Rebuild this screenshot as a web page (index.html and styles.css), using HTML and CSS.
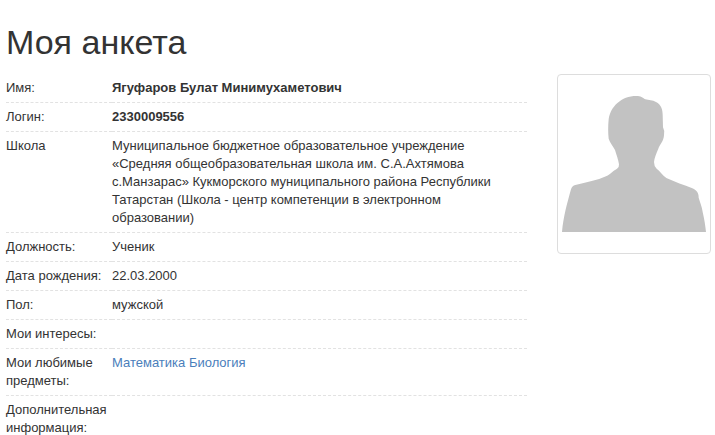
FILE: index.html
```html
<!DOCTYPE html>
<html lang="ru">
<head>
	<meta charset="UTF-8">
	<title>Моя анкета</title>
	<link rel="stylesheet" href="styles.css">
</head>
<body>
	<div class="container">
		<h1>Моя анкета</h1>
		<div class="profile">
			<table class="info">
				<tr>
					<th>Имя:</th>
					<td><b>Ягуфаров Булат Минимухаметович</b></td>
				</tr>
				<tr>
					<th>Логин:</th>
					<td><b>2330009556</b></td>
				</tr>
				<tr>
					<th>Школа</th>
					<td>Муниципальное бюджетное образовательное учреждение «Средняя общеобразовательная школа им. С.А.Ахтямова с.Манзарас» Кукморского муниципального района Республики Татарстан (Школа - центр компетенции в электронном образовании)</td>
				</tr>
				<tr>
					<th>Должность:</th>
					<td>Ученик</td>
				</tr>
				<tr>
					<th>Дата рождения:</th>
					<td>22.03.2000</td>
				</tr>
				<tr>
					<th>Пол:</th>
					<td>мужской</td>
				</tr>
				<tr>
					<th>Мои интересы:</th>
					<td></td>
				</tr>
				<tr>
					<th>Мои любимые предметы:</th>
					<td><a href="#">Математика</a> <a href="#">Биология</a></td>
				</tr>
				<tr>
					<th>Дополнительная информация:</th>
					<td></td>
				</tr>
			</table>
			<div class="photo">
				<svg viewBox="66 57 432 510" role="img" aria-label="Фото">
					<path d="M66 516 C70 470 82 428 93 388 Q96 377 106 375 C140 367 172 361 198 349 C213 342 218 333 231 326 Q238 322 237 313 C235 298 229 284 225 270 C219 258 210 248 206 236 C204 218 204 198 206 178 C211 140 244 108 289 108 C303 108 307 113 316 118 C326 121 338 120 348 126 C363 134 368 148 368 164 L369 202 Q375 213 372 226 C371 243 360 254 355 266 C349 280 343 294 342 306 Q342 319 350 326 C360 333 367 345 379 354 C405 366 432 375 457 385 C471 391 476 400 476 413 C480 427 486 440 488 456 C493 477 496 497 498 516 Z"/>
				</svg>
			</div>
		</div>
	</div>
</body>
</html>
```
FILE: styles.css
```css
*{box-sizing:border-box;}
body{
	margin:0;
	font-family:"Liberation Sans",Arial,sans-serif;
	font-size:13px;
	line-height:18px;
	color:#333;
	background:#fff;
}
.container{
	padding:22px 4px 0 6px;
}
h1{
	margin:0 0 12px;
	font-size:34px;
	font-weight:normal;
	line-height:40px;
}
.profile{
	display:flex;
	align-items:flex-start;
	gap:30px;
}
.info{
	flex:1;
	border-collapse:separate;
	border-spacing:0;
}
.info th,.info td{
	padding:5px 5px 5px 0;
	border-bottom:1px dashed #e2e2e2;
	text-align:left;
	vertical-align:top;
}
.info th{
	width:106px;
	font-weight:normal;
}
.info tr:last-child th,.info tr:last-child td{
	padding-bottom:0;
	border-bottom:none;
}
a{
	color:#4a7ebb;
	text-decoration:none;
}
.photo{
	width:154px;
	padding:4px;
	border:1px solid #ddd;
	border-radius:4px;
}
.photo svg{
	display:block;
	width:100%;
	fill:#c2c2c2;
}
```
